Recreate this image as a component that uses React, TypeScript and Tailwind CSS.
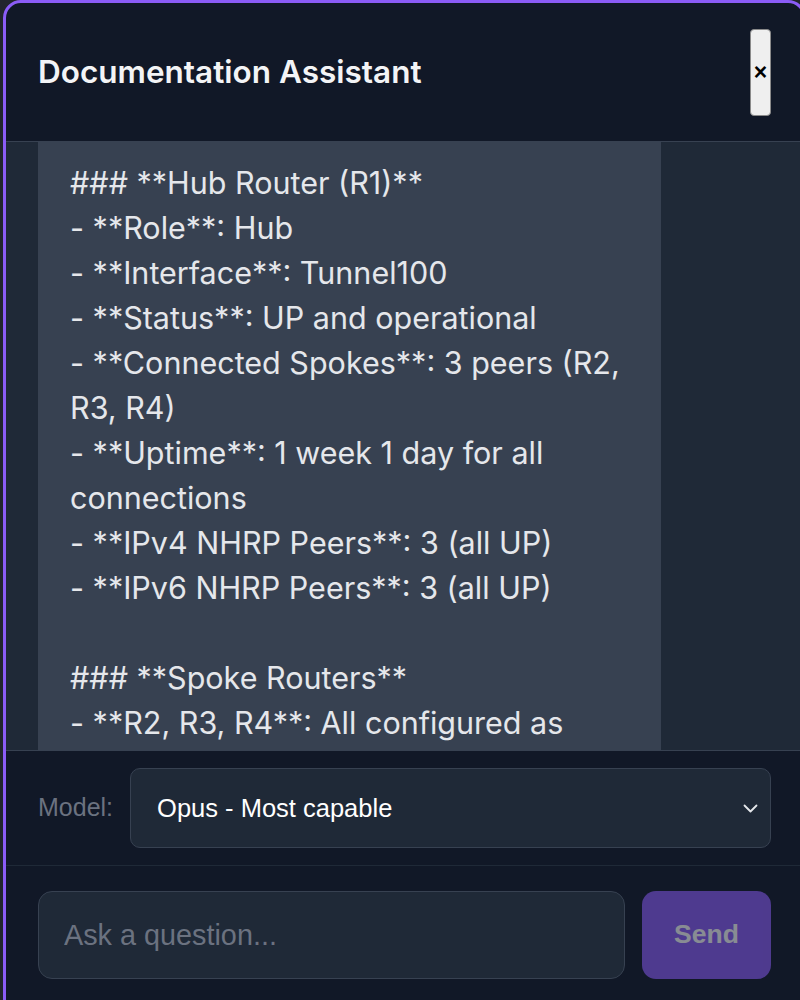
import { useState } from "react";

const answer = `### **Hub Router (R1)**
- **Role**: Hub
- **Interface**: Tunnel100
- **Status**: UP and operational
- **Connected Spokes**: 3 peers (R2, R3, R4)
- **Uptime**: 1 week 1 day for all connections
- **IPv4 NHRP Peers**: 3 (all UP)
- **IPv6 NHRP Peers**: 3 (all UP)

### **Spoke Routers**
- **R2, R3, R4**: All configured as spokes
- **Tunnel Source**: GigabitEthernet0/0
- **NHRP Network ID**: 100`;

const ChevronDown = () => (
    <svg width="15" height="9" viewBox="0 0 15 9" fill="none">
        <polyline points="1.5,1.5 7.5,7.5 13.5,1.5" stroke="#e5e7eb" strokeWidth="1.8" strokeLinecap="round" strokeLinejoin="round" />
    </svg>
);

const App = () => {
    const [question, setQuestion] = useState("");

    return (
        <div className="w-[800px] h-[1000px] overflow-hidden bg-[#22252c] font-['Inter',sans-serif]">
            <div className="ml-[3px] w-[803px] h-[1010px] flex flex-col border-[3px] border-[#8b5cf6] rounded-t-[18px] bg-[#111827] overflow-hidden">
                <div className="h-[139px] flex flex-row items-center justify-between px-8 border-b border-[#374151] shrink-0">
                    <span className="text-[31.5px] font-semibold text-[#f3f4f6]">Documentation Assistant</span>
                    <button className="w-[21px] h-[87px] flex items-center justify-center bg-[#efefef] border border-[#8a8a8a] rounded-[4px] text-black text-[23px] font-bold font-['Liberation_Sans',sans-serif] leading-none">
                        ×
                    </button>
                </div>

                <div className="h-[608px] shrink-0 overflow-hidden bg-[#1f2937] px-8">
                    <div className="w-[623px] bg-[#374151] rounded-b-xl pl-8 pr-7 pt-[18px] pb-8 text-[30.5px] leading-[45px] text-[#e5e7eb] whitespace-pre-wrap">
                        {answer}
                    </div>
                </div>

                <div className="flex flex-row items-center gap-[17px] px-8 py-[17px] border-t border-b border-t-[#374151] border-b-[#1f2937] shrink-0 font-['Liberation_Sans',sans-serif]">
                    <span className="text-[25px] text-[#6b7280]">Model:</span>
                    <div className="flex-1 h-[80px] flex flex-row items-center justify-between rounded-[10px] border border-[#374151] bg-[#1f2937] pl-[26px] pr-[12px]">
                        <span className="text-[25.5px] text-white">Opus - Most capable</span>
                        <ChevronDown />
                    </div>
                </div>

                <div className="flex flex-row gap-[17px] px-8 pt-[25px] font-['Liberation_Sans',sans-serif]">
                    <input
                        value={question}
                        onChange={(e) => setQuestion(e.target.value)}
                        placeholder="Ask a question..."
                        className="flex-1 min-w-0 h-[88px] rounded-[14px] border border-[#374151] bg-[#1f2937] pl-[25px] text-[28.8px] text-white placeholder:text-[#6b7280] outline-none"
                    />
                    <button className="w-[129px] h-[88px] rounded-[14px] bg-[#8b5cf6] opacity-50 text-white text-[26.5px] font-bold">
                        Send
                    </button>
                </div>
            </div>
        </div>
    );
};

export default App;
